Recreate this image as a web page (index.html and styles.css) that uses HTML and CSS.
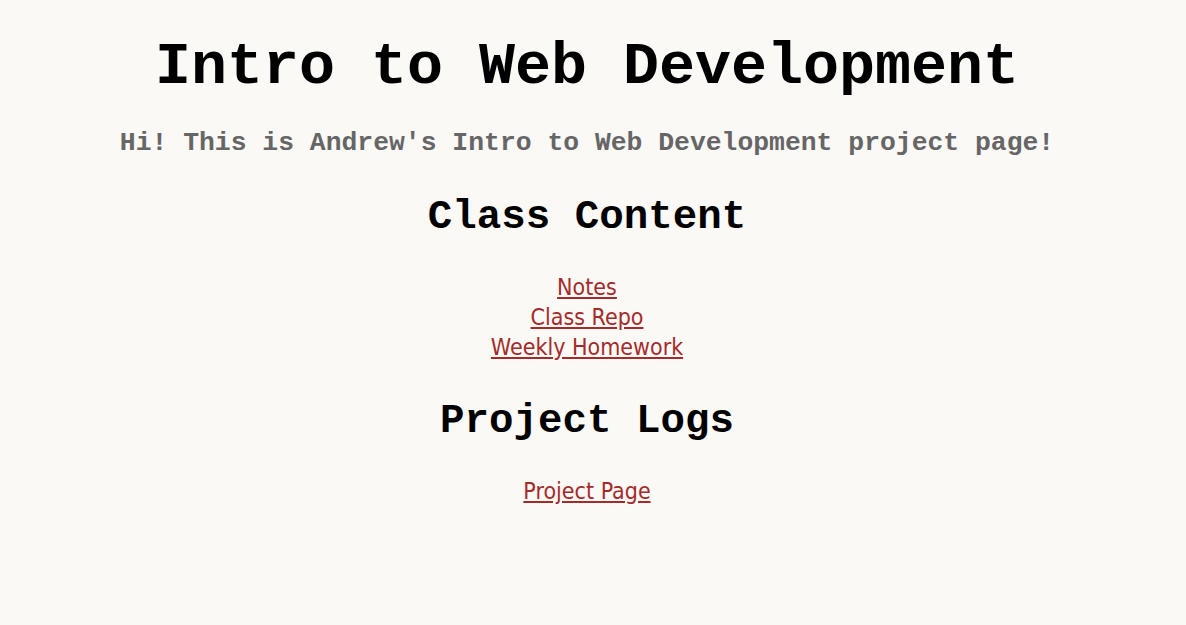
FILE: index.html
```html
<!DOCTYPE html>
<html>
<head>
<meta charset="utf-8">
<title>Intro to Web Development</title>
<link rel="stylesheet" href="styles.css">
</head>
<body>
<main class="page">
  <h1 class="title">Intro to Web Development</h1>
  <p class="subtitle">Hi! This is Andrew's Intro to Web Development project page!</p>
  <section class="block">
    <h2 class="heading">Class Content</h2>
    <nav class="links">
      <a href="#">Notes</a>
      <a href="#">Class Repo</a>
      <a href="#">Weekly Homework</a>
    </nav>
  </section>
  <section class="block">
    <h2 class="heading">Project Logs</h2>
    <nav class="links">
      <a href="#">Project Page</a>
    </nav>
  </section>
</main>
</body>
</html>
```

FILE: styles.css
```css
html, body {
  margin: 0;
  padding: 0;
  background: #faf9f6;
}
.page {
  display: flex;
  flex-direction: column;
  align-items: center;
  text-align: center;
  padding: 33px 12px 0 0;
}
.title {
  font-family: "Liberation Mono", "Courier New", monospace;
  font-weight: bold;
  font-size: 60px;
  line-height: 68px;
  margin: 0;
  color: #000;
}
.subtitle {
  font-family: "Liberation Mono", "Courier New", monospace;
  font-weight: bold;
  font-size: 26.4px;
  line-height: 30px;
  color: #666;
  margin: 27px 0 0;
}
.block {
  display: flex;
  flex-direction: column;
  align-items: center;
}
.heading {
  font-family: "Liberation Mono", "Courier New", monospace;
  font-weight: bold;
  font-size: 40.8px;
  line-height: 46px;
  margin: 36px 0 0;
  color: #000;
}
.links {
  display: flex;
  flex-direction: column;
  align-items: center;
  margin-top: 32px;
}
.links a {
  font-family: Tahoma, "DejaVu Sans Condensed", "DejaVu Sans", sans-serif;
  font-size: 23px;
  line-height: 30px;
  color: #a52a2a;
  text-decoration: underline;
}
```
